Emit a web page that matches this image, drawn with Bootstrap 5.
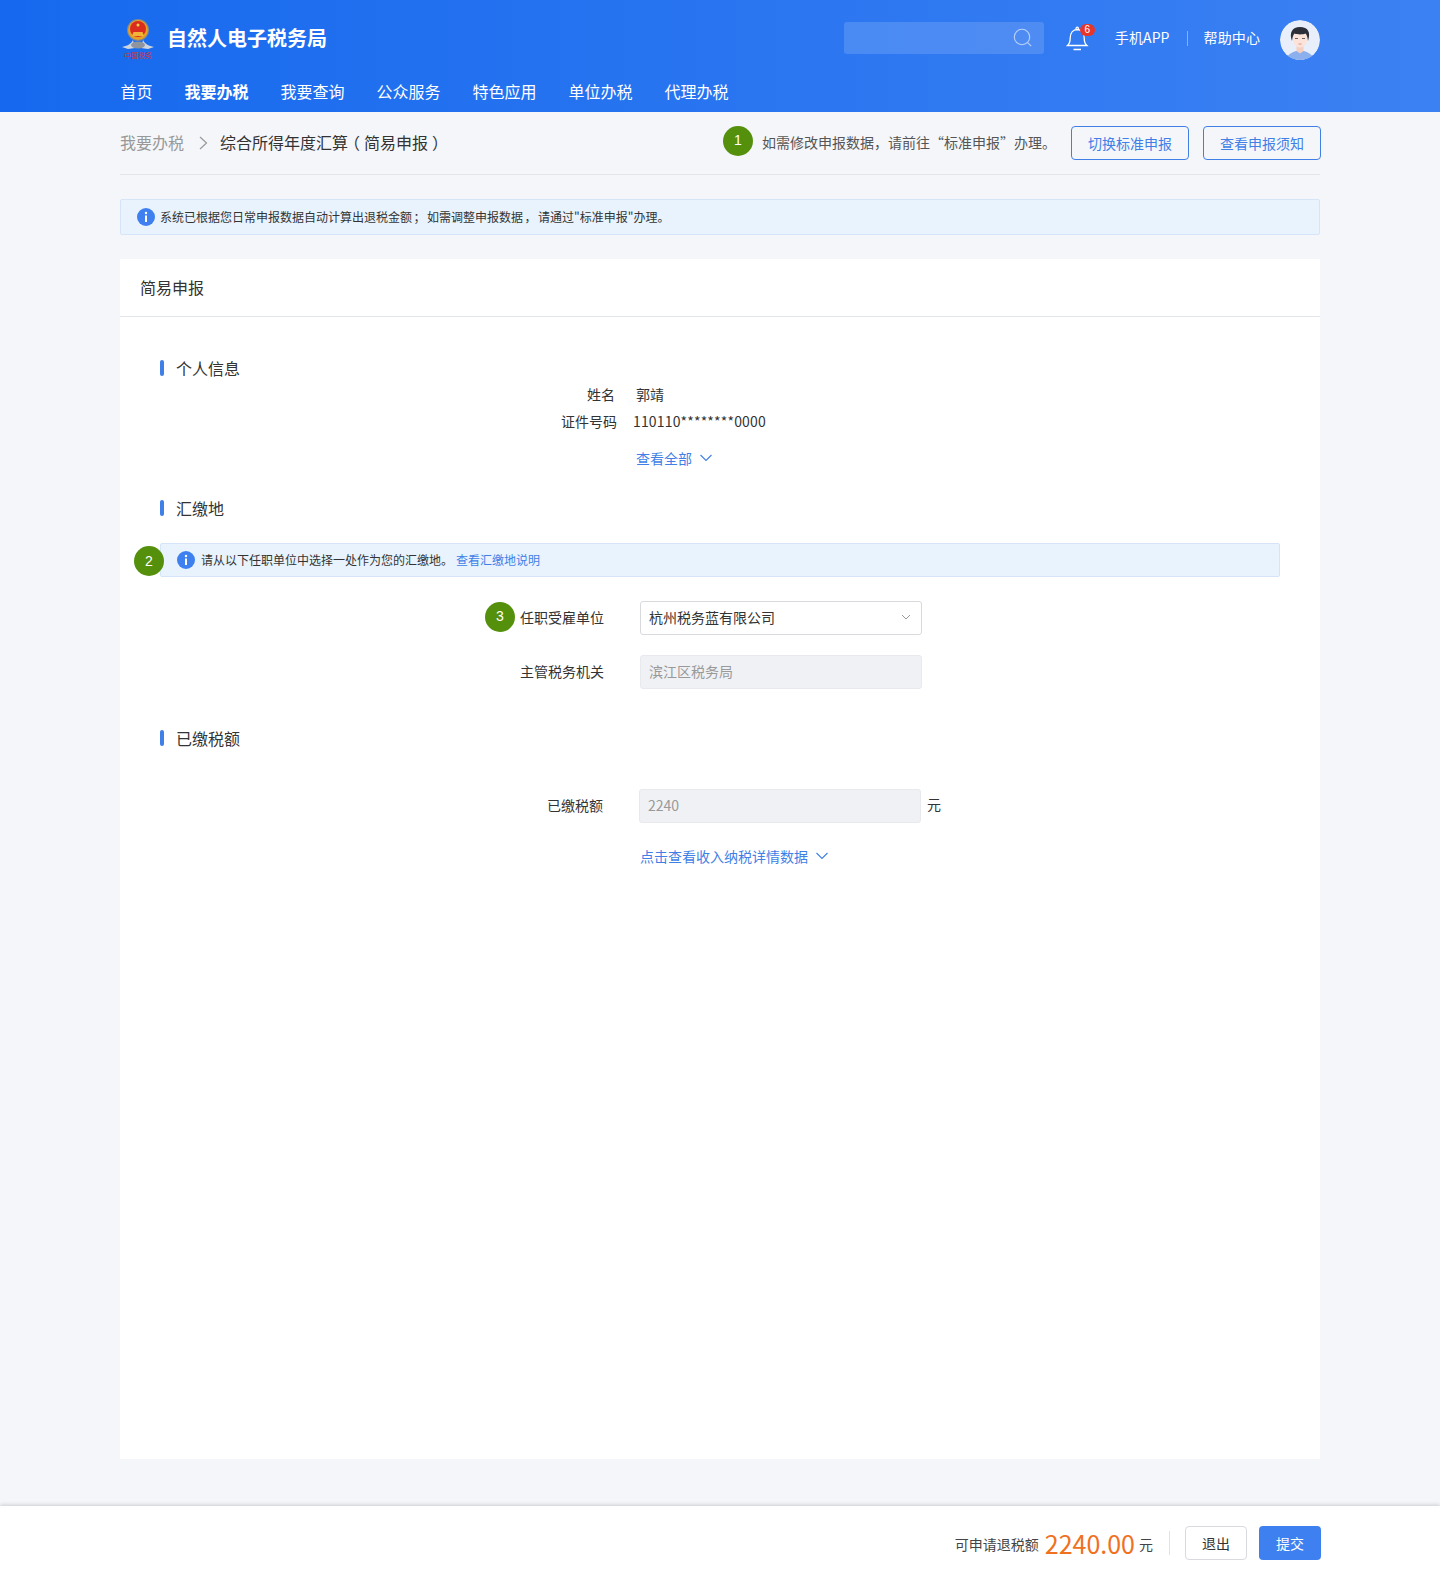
<!DOCTYPE html>
<html lang="zh-CN">
<head>
<meta charset="utf-8">
<title>自然人电子税务局</title>
<link href="https://cdn.jsdelivr.net/npm/bootstrap@5.3.0/dist/css/bootstrap.min.css" rel="stylesheet">
<style>
html,body{height:1580px;overflow:hidden}
body{background:#f4f6fa;color:#333;font-family:"Noto Sans CJK SC","Liberation Sans",sans-serif;font-size:14px;line-height:1.5}
a{text-decoration:none}
.pc{font-family:"Noto Sans CJK TC","Noto Sans CJK SC",sans-serif}
.pa{display:inline-block;padding:0 .25em;font-feature-settings:"halt"}
.wrap{width:1200px;margin:0 auto 0 120px}
.top{height:112px;background:linear-gradient(90deg,#1669ee,#3c81f3);color:#fff}
.top-main{height:80px}
.logo-mark{margin-left:1px;margin-top:-3px;display:block}
.brand{font-size:20px;font-weight:700;margin-left:12px;padding-bottom:4px}
.top-links{font-size:14px}
.top-links .tl{padding-bottom:6px;letter-spacing:.1px}
.searchbox{width:200px;height:32px;background:rgba(255,255,255,.14);border-radius:3px;padding-right:11px;margin-top:-4px}
.bellbox{position:relative;width:24px;height:28px;margin-left:22px;margin-right:25px;margin-top:-5px}
.bellnum{position:absolute;left:14px;top:0;width:15px;height:12px;border-radius:6px;background:#e8352c;color:#fff;font-size:10px;line-height:12px;text-align:center;font-family:"Liberation Sans",sans-serif}
.vline{width:1px;height:15px;background:rgba(255,255,255,.4);margin:0 16px 0 17px;transform:translateY(-2px)}
.avatar{width:40px;height:40px;border-radius:50%;margin-left:20px;display:block}
.mainnav{gap:32px;font-size:16px;height:32px;margin-top:-1px;padding-left:.5px}
.mainnav a{color:#fff;line-height:24px}
.mainnav a.on{font-weight:700}
.crumbbar{height:63px;padding-bottom:1px;border-bottom:1px solid #e2e5ea}
.crumb-a{font-size:16px;color:#999;margin-top:-2px}
.crumb-b{font-size:16px;color:#333;margin-left:12px;margin-top:-2px}
.crumb-sep{margin-left:15px;display:block}
.step{width:30px;height:30px;border-radius:50%;background:#55900d;color:#fff;font-family:"Liberation Sans",sans-serif;font-size:14px;display:flex;align-items:center;justify-content:center;flex:none}
.step1{margin-top:-4px}
.tip{color:#555;font-size:14px;margin-left:9px;margin-right:15px}
.btn-o{width:118px;height:34px;border:1px solid #3f7fe6;border-radius:4px;color:#3f7fe6;background:transparent;font-size:14px;padding:0;line-height:32px}
.btn-gap{margin-left:14px;margin-right:-1px}
.notice{background:#e8f3fe;border:1px solid #d5e5f7;border-radius:2px;font-size:12px;color:#333}
.notice1{height:36px;margin-top:24px;padding-left:16px}
.notice svg{flex:none}
.notice1>span{margin-left:5px}
.notice1 .pc{padding:0 1.500px}
.sheet{background:#fff;height:1200px;margin-top:24px}
.sheet-h{height:58px;border-bottom:1px solid #e2e5ea;font-size:16px;padding:0 0 2px 20px;display:flex;align-items:center}
.sec{position:relative;height:16px;margin-left:40px;padding-left:16px;font-size:16px;line-height:16px;display:flex;align-items:center}
.sec::before{content:"";position:absolute;left:0;top:0;width:4px;height:16px;background:#3f7fe6;border-radius:2px}
.s1{margin-top:43px}
.info{width:400px;margin-left:440px;margin-top:5px}
.inf-r{height:27px;align-items:center}
.inf-l{width:57px;text-align:right}
.inf-l.nm{width:55px}
.inf-v{margin-left:21px}
.inf-id{margin-left:16px;letter-spacing:.16px}
.more{color:#3f7fe6}
.s2{margin-top:30px}
.n2row{margin-top:27px;margin-left:13px;margin-right:40px;position:relative}
.notice2{height:34px;flex:1;margin-left:27px;padding-left:16px}
.notice2 span{margin-left:6px}
.notice2 a{color:#3f7fe6;margin-left:3px}
.step2{position:absolute;left:1px;top:3px}
.frow{height:34px;margin-top:24px;align-items:center}
.frow2{margin-top:20px}
.flabel{width:484px;text-align:right;padding-bottom:2px}
.fctl{width:282px;height:34px;margin-left:36px;border:1px solid #d8dade;border-radius:3px;padding:0 10px 2px 8px;font-size:14px;color:#333;background:#fff}
.fctl:disabled{background:#f0f1f4;border-color:#e8e9ec;color:#999;opacity:1}
.stepwrap{position:relative}
.step3{position:absolute;left:-35px;top:-5px}
.s3{margin-top:41px}
.taxrow{margin-top:43px}
.taxrow .flabel{width:483px}
.unit{margin-left:6px;padding-bottom:4px}
.detail{margin-left:520px;margin-top:21px;height:24px;display:flex;align-items:center}
.morerow.detail{margin-left:516px;margin-top:11px}
.bottom{position:absolute;left:0;right:0;top:1506px;height:74px;background:#fff;box-shadow:0 -1px 4px rgba(0,0,0,.18)}
.bottom-in{height:74px;padding-top:20px;justify-content:flex-end;align-items:flex-start;margin-right:119px}
.amount{font-size:25px;color:#f0701e;line-height:34px;margin:0 4px 0 6px}
.tot{line-height:34px;color:#444;padding-top:1px}
.tline{width:1px;height:24px;background:#e0e2e6;margin:5px 15px 0 16px}
.btn-q{width:62px;height:34px;border:1px solid #d8dade;border-radius:4px;background:#fff;color:#333;padding:0;font-size:14px}
.btn-s{width:62px;height:34px;border:0;border-radius:4px;background:#3f80f0;color:#fff;padding:0;font-size:14px;margin-left:12px}
</style>
</head>
<body>
<header class="top">
  <div class="wrap">
    <div class="top-main d-flex align-items-center">
      <svg class="logo-mark" width="34" height="42" viewBox="0 0 34 42"><path d="M1 29c5-1 9-3 11-7l2 8-7 1zM33 29c-5-1-9-3-11-7l-2 8 7 1z" fill="#cfd5de"/><ellipse cx="17" cy="27" rx="7" ry="3.500" fill="#8f959e"/><circle cx="17" cy="12" r="11" fill="#7f8890"/><circle cx="17" cy="12" r="10" fill="#e8a122"/><circle cx="17" cy="11" r="8" fill="#db2c20"/><path d="M11 18h12l-1.500-4h-9z" fill="#f2b437"/><circle cx="17" cy="7" r="1.500" fill="#f6d04c"/><text x="17" y="40" text-anchor="middle" font-size="7" font-family="Noto Sans CJK SC" fill="#d8322a">中国税务</text></svg>
      <div class="brand">自然人电子税务局</div>
      <div class="ms-auto d-flex align-items-center top-links">
        <div class="searchbox d-flex align-items-center justify-content-end"><svg width="20" height="20" viewBox="0 0 20 20" fill="none" stroke="#b9d2fa" stroke-width="1.100"><circle cx="9" cy="9" r="7.700"/><path d="M14.600 14.600l3.600 3.600"/></svg></div>
        <div class="bellbox"><svg width="24" height="28" viewBox="0 0 24 28" fill="none" stroke="#fff" stroke-width="1.300"><path d="M1.500 21.500c2-1.700 2.700-3.400 2.700-7.500 0-5 2.800-8.300 7-8.500 4.200.2 7 3.500 7 8.500 0 4.100.7 5.800 2.700 7.500z"/><path d="M10 5c0-1.200.6-1.800 1.200-1.800s1.200.6 1.200 1.800M7.500 25.500h7.500"/></svg><span class="bellnum">6</span></div>
        <span class="tl">手机APP</span><span class="vline"></span><span class="tl">帮助中心</span>
        <svg class="avatar" viewBox="0 0 40 40"><defs><clipPath id="ac"><circle cx="20" cy="20" r="20"/></clipPath></defs><g clip-path="url(#ac)"><rect width="40" height="40" fill="#e8effa"/><path d="M6 40c1-6 7-8 10-9h8c3 1 9 3 10 9z" fill="#8cb0ee"/><path d="M16.500 25h7v6l-3.500 2.500-3.500-2.500z" fill="#f6cfc0"/><ellipse cx="20" cy="18" rx="7.500" ry="9.500" fill="#fbe3d9"/><path d="M12 21c-3-8 0-14 8-14s11 5 8 14c-.5-3.500-1-6-2.500-7.500-3 1.200-8 1.200-11 0-1.500 1.500-2 4-2.500 7.500z" fill="#2d2f38"/><path d="M15 18.500h3M22 18.500h3" stroke="#555" stroke-width=".9"/><path d="M18.500 24h3" stroke="#d98d80" stroke-width=".9"/></g></svg>
      </div>
    </div>
    <nav class="mainnav d-flex">
      <a href="#">首页</a><a href="#" class="on">我要办税</a><a href="#">我要查询</a><a href="#">公众服务</a><a href="#">特色应用</a><a href="#">单位办税</a><a href="#">代理办税</a>
    </nav>
  </div>
</header>
<main class="wrap">
  <div class="crumbbar d-flex align-items-center">
    <span class="crumb-a">我要办税</span>
    <svg class="crumb-sep" width="9" height="14" viewBox="0 0 9 14" fill="none" stroke="#999" stroke-width="1.200"><path d="M1 1l6.500 6L1 13"/></svg>
    <span class="crumb-b">综合所得年度汇算<span class="pa">（</span>简易申报<span class="pa">）</span></span>
    <div class="ms-auto d-flex align-items-center">
      <span class="step step1">1</span>
      <span class="tip">如需修改申报数据<span class="pc">，</span>请前往“标准申报”办理。</span>
      <button class="btn-o" type="button">切换标准申报</button>
      <button class="btn-o btn-gap" type="button">查看申报须知</button>
    </div>
  </div>
  <div class="notice notice1 d-flex align-items-center">
    <svg width="18" height="18" viewBox="0 0 18 18"><circle cx="9" cy="9" r="9" fill="#3f80f0"/><circle cx="9" cy="5" r="1.200" fill="#fff"/><path d="M8 7.500h2V14H8z" fill="#fff"/></svg>
    <span>系统已根据您日常申报数据自动计算出退税金额<span class="pc">；</span>如需调整申报数据<span class="pc">，</span>请通过"标准申报"办理。</span>
  </div>
  <section class="sheet">
    <div class="sheet-h">简易申报</div>
    <div class="sec s1">个人信息</div>
    <div class="info">
      <div class="inf-r d-flex"><span class="inf-l nm">姓名</span><span class="inf-v">郭靖</span></div>
      <div class="inf-r d-flex"><span class="inf-l">证件号码</span><span class="inf-id">110110********0000</span></div>
    </div>
    <div class="detail morerow"><a href="#" class="more">查看全部</a><svg class="ms-2" width="12" height="8" viewBox="0 0 12 8" fill="none" stroke="#3f7fe6" stroke-width="1.100"><path d="M.5 1l5.500 5.500L11.500 1"/></svg></div>
    <div class="sec s2">汇缴地</div>
    <div class="n2row d-flex">
      <span class="step step2">2</span>
      <div class="notice notice2 d-flex align-items-center">
        <svg width="18" height="18" viewBox="0 0 18 18"><circle cx="9" cy="9" r="9" fill="#3f80f0"/><circle cx="9" cy="5" r="1.200" fill="#fff"/><path d="M8 7.500h2V14H8z" fill="#fff"/></svg>
        <span>请从以下任职单位中选择一处作为您的汇缴地。</span><a href="#">查看汇缴地说明</a>
      </div>
    </div>
    <div class="frow d-flex">
      <div class="flabel"><span class="stepwrap"><span class="step step3">3</span>任职受雇单位</span></div>
      <div class="fctl d-flex justify-content-between align-items-center"><span>杭州税务蓝有限公司</span><svg width="10" height="6" viewBox="0 0 10 6" fill="none" stroke="#999"><path d="M1 1l4 4 4-4"/></svg></div>
    </div>
    <div class="frow frow2 d-flex">
      <div class="flabel">主管税务机关</div>
      <input class="fctl" disabled value="滨江区税务局">
    </div>
    <div class="sec s3">已缴税额</div>
    <div class="frow taxrow d-flex">
      <div class="flabel">已缴税额</div>
      <input class="fctl" disabled value="2240"><span class="unit">元</span>
    </div>
    <div class="detail"><a href="#" class="more">点击查看收入纳税详情数据</a><svg class="ms-2" width="12" height="8" viewBox="0 0 12 8" fill="none" stroke="#3f7fe6" stroke-width="1.100"><path d="M.5 1l5.500 5.500L11.500 1"/></svg></div>
  </section>
</main>
<footer class="bottom">
  <div class="bottom-in d-flex">
    <span class="tot">可申请退税额</span><span class="amount">2240.00</span><span class="tot">元</span>
    <span class="tline"></span>
    <button class="btn-q" type="button">退出</button>
    <button class="btn-s" type="button">提交</button>
  </div>
</footer>
<script src="https://cdn.jsdelivr.net/npm/bootstrap@5.3.0/dist/js/bootstrap.bundle.min.js"></script>
</body>
</html>
